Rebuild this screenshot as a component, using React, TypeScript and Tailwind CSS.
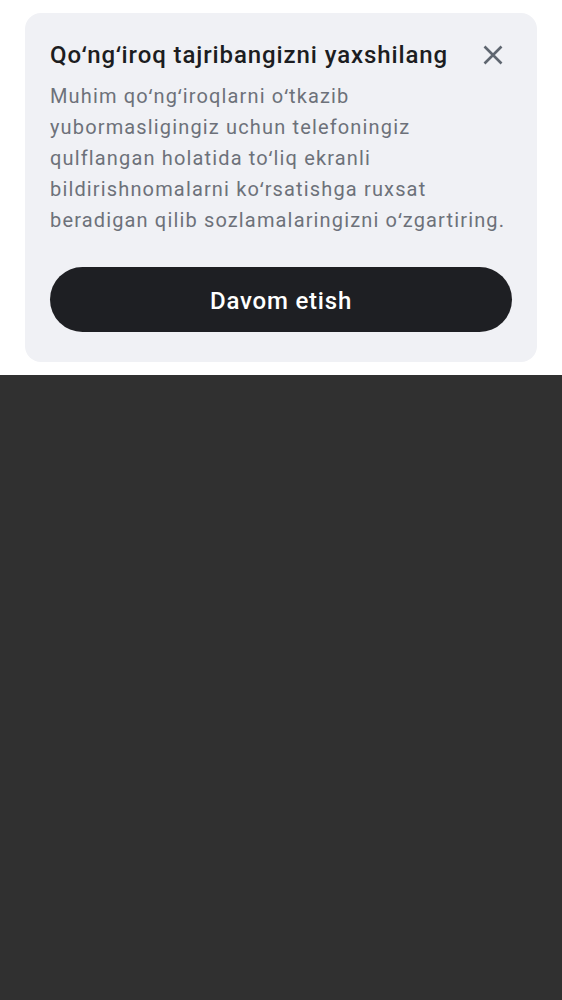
import React from 'react';

const font = { fontFamily: 'Roboto, "Noto Sans", sans-serif' };

const CloseIcon: React.FC = () => (
  <svg width="20" height="20" viewBox="0 0 20 20" fill="none" stroke="#5f6670" strokeWidth="2.6" strokeLinecap="butt">
    <path d="M1.5 1.5 L18.5 18.5 M18.5 1.5 L1.5 18.5" />
  </svg>
);

const lines = [
  'Muhim qoʻngʻiroqlarni oʻtkazib',
  'yubormasligingiz uchun telefoningiz',
  'qulflangan holatida toʻliq ekranli',
  'bildirishnomalarni koʻrsatishga ruxsat',
  'beradigan qilib sozlamalaringizni oʻzgartiring.'
];

export default function App() {
  return (
    <div className="flex min-h-[1000px] w-[562px] flex-col bg-[#303030]" style={font}>
      <div className="bg-white px-[25px] pt-[13px] pb-[13px]">
        <div className="rounded-[16px] bg-[#f0f1f5] px-[25px] pt-[28px] pb-[30px]">
          <div className="flex items-center justify-between">
            <h1 className="text-[24px] leading-[28px] font-medium tracking-[0.9px] text-[#1c1d21]">
              Qoʻngʻiroq tajribangizni yaxshilang
            </h1>
            <button className="mr-[5px] flex h-[28px] w-[28px] items-center justify-center" title="Yopish">
              <CloseIcon />
            </button>
          </div>
          <p className="-mr-[10px] mt-[12px] text-[20px] leading-[31px] tracking-[1.15px] whitespace-nowrap text-[#6d717a]">
            {lines.map((line, i) => (
              <span key={i} className="block">{line}</span>
            ))}
          </p>
          <button className="mt-[31px] flex h-[65px] w-full items-center justify-center rounded-full bg-[#1e1f23] pt-[3px] text-[24px] font-medium tracking-[0.8px] text-white">
            Davom etish
          </button>
        </div>
      </div>
      <div className="flex-1" />
    </div>
  );
}
